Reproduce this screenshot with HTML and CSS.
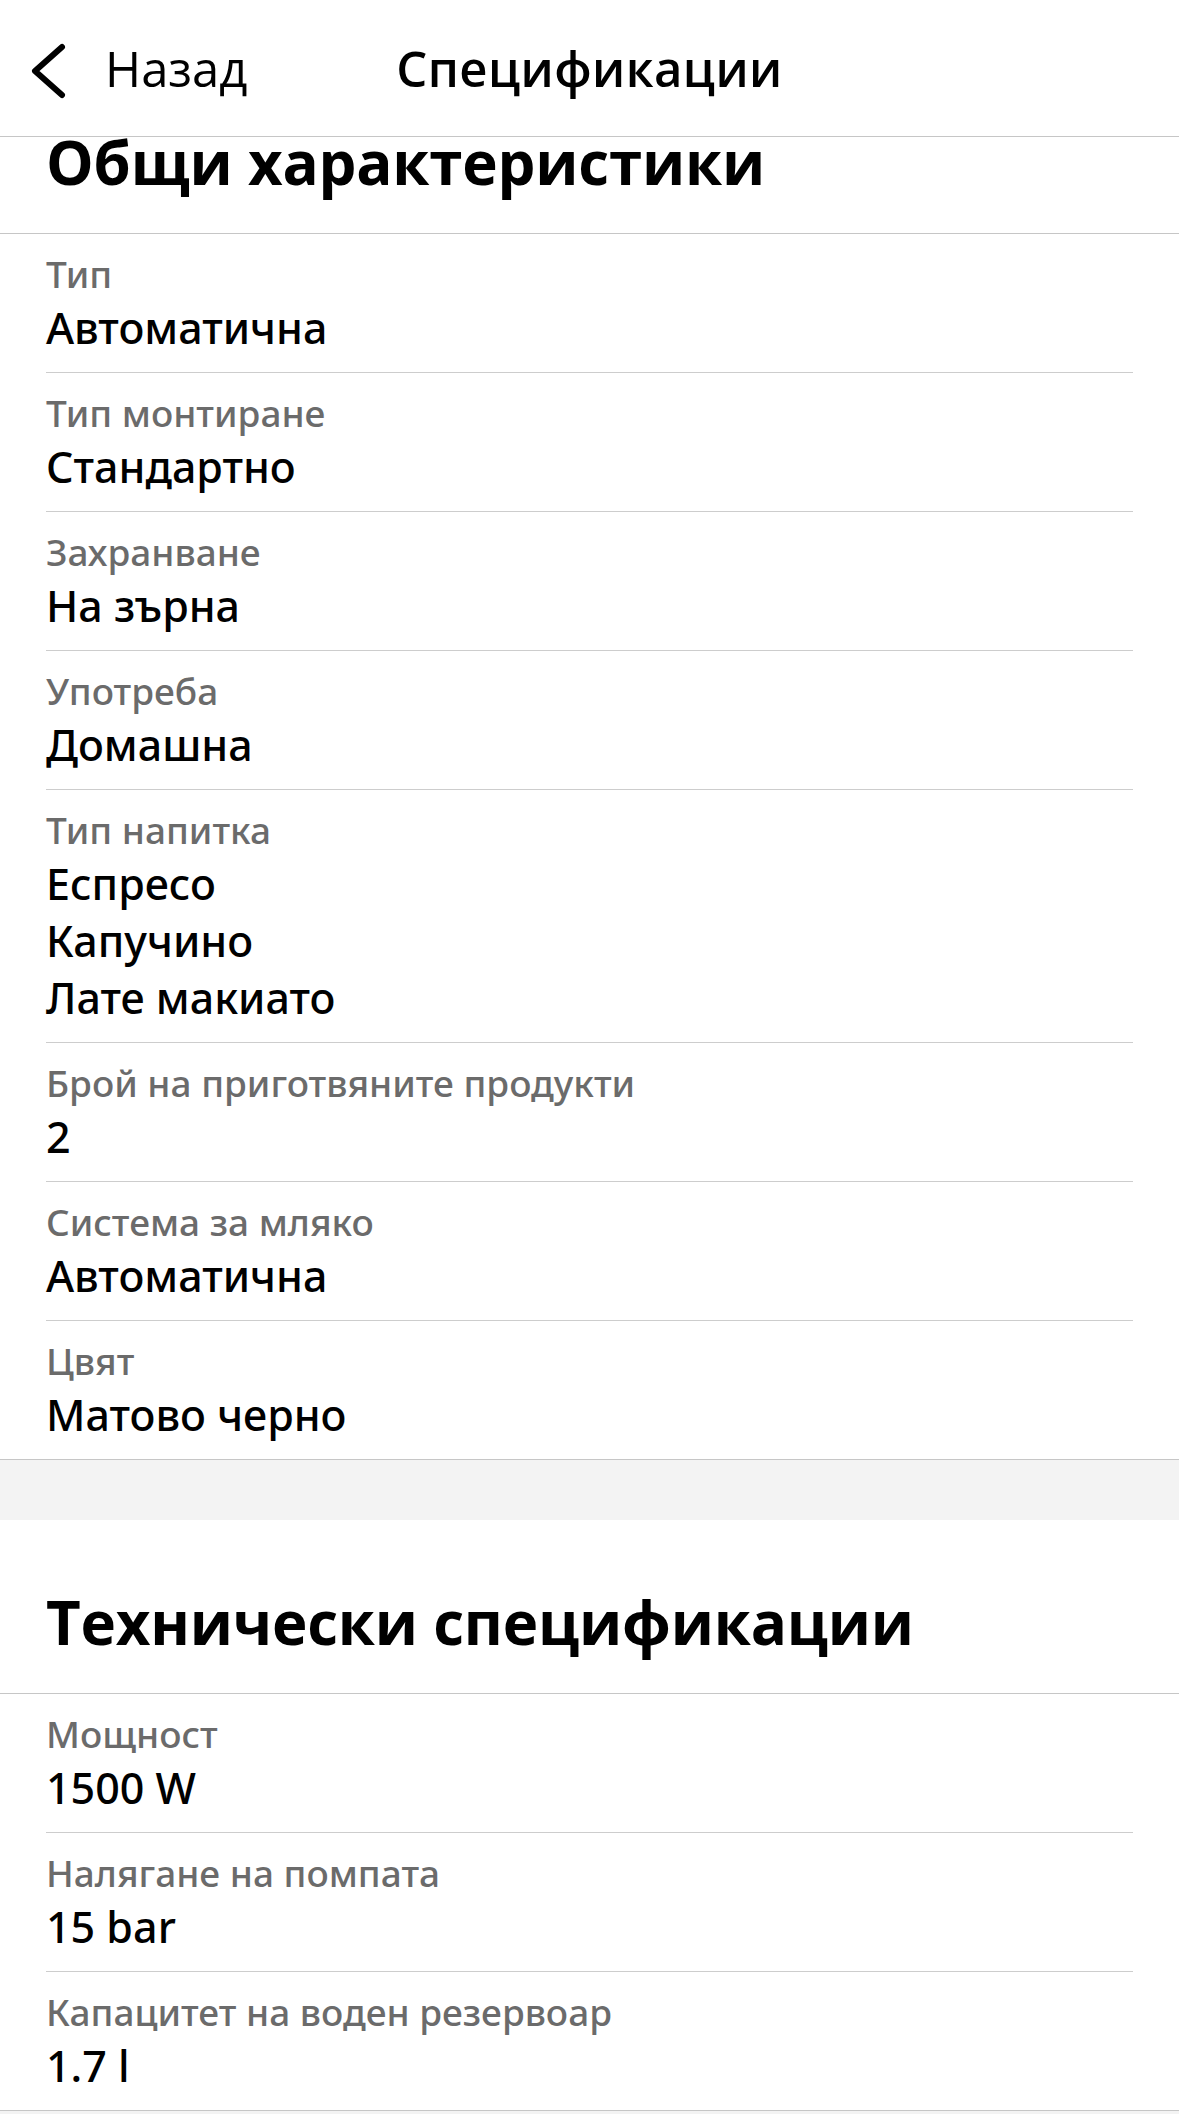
FILE: index.html
```html
<!DOCTYPE html>
<html lang="bg">
<head>
<meta charset="utf-8">
<title>Спецификации</title>
<link rel="stylesheet" href="styles.css">
</head>
<body>
<header class="topbar">
  <a class="back" href="#">
    <svg class="back-icon" width="40" height="64" viewBox="0 0 40 64" aria-hidden="true">
      <path d="M33 9 L6 33 L33 57" fill="none" stroke="#000" stroke-width="6" stroke-linecap="round" stroke-linejoin="round"/>
    </svg>
    <span class="back-label">Назад</span>
  </a>
  <h1 class="topbar-title">Спецификации</h1>
  <span class="topbar-spacer"></span>
</header>

<main>
  <section class="spec-section">
    <h2 class="section-title section-title--scrolled">Общи характеристики</h2>
    <ul class="spec-list">
      <li class="spec-row"><div class="spec-label">Тип</div><div class="spec-value">Автоматична</div></li>
      <li class="spec-row"><div class="spec-label">Тип монтиране</div><div class="spec-value">Стандартно</div></li>
      <li class="spec-row"><div class="spec-label">Захранване</div><div class="spec-value">На зърна</div></li>
      <li class="spec-row"><div class="spec-label">Употреба</div><div class="spec-value">Домашна</div></li>
      <li class="spec-row"><div class="spec-label">Тип напитка</div><div class="spec-value">Еспресо</div><div class="spec-value">Капучино</div><div class="spec-value">Лате макиато</div></li>
      <li class="spec-row"><div class="spec-label">Брой на приготвяните продукти</div><div class="spec-value">2</div></li>
      <li class="spec-row"><div class="spec-label">Система за мляко</div><div class="spec-value">Автоматична</div></li>
      <li class="spec-row"><div class="spec-label">Цвят</div><div class="spec-value">Матово черно</div></li>
    </ul>
  </section>

  <div class="section-gap"></div>

  <section class="spec-section">
    <h2 class="section-title">Технически спецификации</h2>
    <ul class="spec-list">
      <li class="spec-row"><div class="spec-label">Мощност</div><div class="spec-value">1500 W</div></li>
      <li class="spec-row"><div class="spec-label">Налягане на помпата</div><div class="spec-value">15 bar</div></li>
      <li class="spec-row"><div class="spec-label">Капацитет на воден резервоар</div><div class="spec-value">1.7 l</div></li>
    </ul>
  </section>

  <div class="section-gap section-gap--end"></div>
</main>
</body>
</html>
```

FILE: styles.css
```css
* { box-sizing: border-box; }

html, body {
  margin: 0;
  padding: 0;
  background: #ffffff;
}

body {
  font-family: "Open Sans", "Noto Sans", "DejaVu Sans", sans-serif;
  color: #000000;
  overflow: hidden;
}

.topbar {
  display: grid;
  grid-template-columns: 1fr auto 1fr;
  align-items: center;
  height: 137px;
  border-bottom: 1px solid #c6c6c6;
  background: #ffffff;
}

.back {
  display: flex;
  align-items: center;
  color: #000000;
  text-decoration: none;
  padding-left: 29px;
}

.back-icon {
  display: block;
  flex: none;
  margin-top: 4px;
}

.back-label {
  font-size: 49px;
  line-height: 60px;
  margin-left: 36px;
  font-weight: 400;
}

.topbar-title {
  margin: 0;
  font-size: 49px;
  line-height: 60px;
  font-weight: 600;
  letter-spacing: 0.4px;
}

.spec-section {
  background: #ffffff;
  border-bottom: 1px solid #c6c6c6;
}

.section-title {
  margin: 0;
  padding: 62px 46px 31px;
  font-size: 60px;
  line-height: 80px;
  font-weight: 700;
  border-bottom: 1px solid #c6c6c6;
  letter-spacing: -0.2px;
}

.section-title--scrolled {
  padding-top: 0;
  padding-bottom: 46px;
  line-height: 50px;
}

.spec-list {
  list-style: none;
  margin: 0;
  padding: 0 46px;
}

.spec-row {
  padding: 14px 0 16px;
  border-bottom: 1px solid #cdcdcd;
}

.spec-row:last-child {
  border-bottom: none;
}

.spec-label {
  font-family: "Noto Sans", "Open Sans", sans-serif;
  font-size: 37px;
  line-height: 51px;
  font-weight: 500;
  color: #6b6b6b;
}

.spec-value {
  font-family: "Noto Sans", "Open Sans", sans-serif;
  font-size: 43px;
  line-height: 57px;
  font-weight: 500;
  color: #000000;
}

.section-gap {
  height: 60px;
  background: #f3f3f3;
}

.section-gap--end {
  height: 400px;
}
```
